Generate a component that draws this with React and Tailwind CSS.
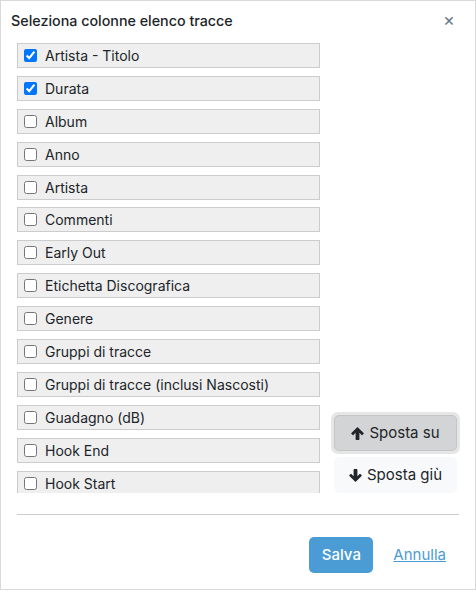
const columns = [
  { label: 'Artista - Titolo', checked: true },
  { label: 'Durata', checked: true },
  { label: 'Album' },
  { label: 'Anno' },
  { label: 'Artista' },
  { label: 'Commenti' },
  { label: 'Early Out' },
  { label: 'Etichetta Discografica' },
  { label: 'Genere' },
  { label: 'Gruppi di tracce' },
  { label: 'Gruppi di tracce (inclusi Nascosti)' },
  { label: 'Guadagno (dB)' },
  { label: 'Hook End' },
  { label: 'Hook Start' },
  { label: 'Hook Type' },
  { label: 'ID' },
]

// chunky solid arrow, like the FA "arrow-up" glyph at small size
function Arrow({ down }) {
  return (
    <svg viewBox="0 0 13 13" className={`w-[13px] h-[13px] ${down ? 'rotate-180' : ''}`} fill="currentColor">
      <path d="M6.5 0 L12.6 6.1 Q13 6.6 12.5 7 L11.4 8 Q11 8.3 10.6 7.9 L8.4 5.7 V12.2 Q8.4 13 7.6 13 H5.4 Q4.6 13 4.6 12.2 V5.7 L2.4 7.9 Q2 8.3 1.6 8 L0.5 7 Q0 6.6 0.4 6.1 Z" />
    </svg>
  )
}

export default function App() {
  return (
    <div className="w-[476px] h-[592px] bg-white" style={{ fontFamily: 'Inter, "Noto Sans", sans-serif' }}>
      <div className="w-[476px] h-[590px] border border-[#d9d9d9] flex flex-col">
        {/* Header */}
        <div className="flex items-center justify-between pl-[10px] pr-[20px] h-[40px]">
          <h1 className="text-[14.3px] font-medium text-[#212529]">Seleziona colonne elenco tracce</h1>
          <button className="text-[#6c7a8c] text-[18px] leading-none -mt-[3px]">×</button>
        </div>

        {/* Body */}
        <div className="flex items-end pl-[16px] pr-[15px] mt-[2px]">
          <div className="w-[305px] h-[450px] overflow-hidden">
            {columns.map((col, i) => (
              <label
                key={i}
                className="flex items-center h-[25px] mb-[7.9px] bg-[#efefef] border border-[#cccccc] pl-[6px] text-[14px] text-[#212529]"
              >
                <input type="checkbox" defaultChecked={col.checked} className="w-[13px] h-[13px] m-0" />
                <span className="ml-[8px]">{col.label}</span>
              </label>
            ))}
          </div>
          <div className="ml-[11px] flex flex-col">
            <div className="p-[3px] rounded-[7px] bg-[#e6e6e7]">
              <button className="w-[123px] h-[36px] flex items-center justify-center gap-[5px] bg-[#d3d4d5] border border-[#c4c5c6] rounded-[5px] text-[15px] text-[#212529]">
                <Arrow />
                Sposta su
              </button>
            </div>
            <button className="ml-[3px] mt-[3px] w-[123px] h-[36px] flex items-center justify-center gap-[5px] bg-[#f8f9fa] rounded-[5px] text-[15px] text-[#212529]">
              <Arrow down />
              Sposta giù
            </button>
          </div>
        </div>

        {/* Footer */}
        <div className="mx-[16px] mt-[21px] border-t border-[#cccccc]" />
        <div className="flex items-center justify-end gap-[20px] pr-[29px] mt-[22px]">
          <button className="w-[64px] h-[36px] rounded-[5px] bg-[#4b9bd5] text-white text-[15px] font-medium">Salva</button>
          <a href="#" className="text-[15px] text-[#4b9bd5] underline">Annulla</a>
        </div>
      </div>
    </div>
  )
}
